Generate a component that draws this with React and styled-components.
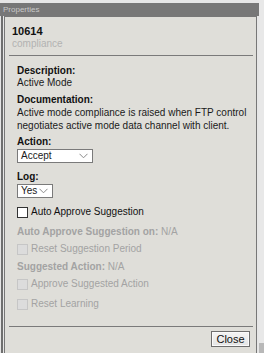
import React from "react";
import styled, { createGlobalStyle } from "styled-components";

const GlobalStyle = createGlobalStyle`
  html, body {
    margin: 0;
    padding: 0;
    background: #e6e6e6;
  }
  body {
    font-family: "Liberation Sans", Arial, sans-serif;
    font-size: 10px;
    color: #1a1a1a;
  }
`;

// Chevron used inside the fake select boxes
const Chevron = () => (
  <svg width="9" height="6" viewBox="0 0 9 6">
    <path d="M0.5 0.8 L4.5 4.8 L8.5 0.8" fill="none" stroke="#8a8a8a" strokeWidth="1" />
  </svg>
);

const App = () => {
  return (
    <>
      <GlobalStyle />
      <Page>
        <Main>
          <TitleBar>Properties</TitleBar>
          <Frame>
            <Panel>
              <Heading>
                <RuleId>10614</RuleId>
                <RuleName>compliance</RuleName>
              </Heading>
              <Divider />
              <Content>
                <Label>Description:</Label>
                <Text>Active Mode</Text>

                <Label $top={5}>Documentation:</Label>
                <Paragraph>
                  Active mode compliance is raised when FTP control negotiates
                  active mode data channel with client.
                </Paragraph>

                <Label $top={4}>Action:</Label>
                <Select $width={76}>
                  <span>Accept</span>
                  <Chevron />
                </Select>

                <Label $top={8}>Log:</Label>
                <Select $width={36}>
                  <span>Yes</span>
                  <Chevron />
                </Select>

                <CheckRow $top={8}>
                  <Box />
                  <span>Auto Approve Suggestion</span>
                </CheckRow>

                <Muted $top={8}>
                  <b>Auto Approve Suggestion on:</b> N/A
                </Muted>
                <CheckRow $top={5} $disabled>
                  <Box $disabled />
                  <span>Reset Suggestion Period</span>
                </CheckRow>

                <Muted $top={6}>
                  <b>Suggested Action:</b> N/A
                </Muted>
                <CheckRow $top={5} $disabled>
                  <Box $disabled />
                  <span>Approve Suggested Action</span>
                </CheckRow>
                <CheckRow $top={8} $disabled>
                  <Box $disabled />
                  <span>Reset Learning</span>
                </CheckRow>
              </Content>
              <Divider $top={16} />
              <Footer>
                <Button>Close</Button>
              </Footer>
            </Panel>
          </Frame>
        </Main>
        <ScrollTrack>
          <ScrollThumb />
        </ScrollTrack>
      </Page>
    </>
  );
};

const Page = styled.div`
  display: flex;
  width: 264px;
  height: 353px;
  overflow: hidden;
  background: #e6e6e6;
`;

const Main = styled.div`
  width: 259px;
  display: flex;
  flex-direction: column;
  padding-top: 3px;
`;

const TitleBar = styled.div`
  height: 13px;
  line-height: 13px;
  background: #777777;
  color: #c9c9c9;
  font-size: 8px;
  padding-left: 3px;
`;

const Frame = styled.div`
  flex: 1;
  display: flex;
  margin-left: 1px;
  border-left: 2px solid #6f6f6f;
  padding-left: 1px;
  padding-right: 2px;
`;

const Panel = styled.div`
  flex: 1;
  background: #dfded9;
  border: 1px solid #777777;
  border-bottom: none;
  display: flex;
  flex-direction: column;
`;

const Heading = styled.div`
  padding: 7px 0 0 7px;
`;

const RuleId = styled.div`
  font-size: 11px;
  font-weight: bold;
  line-height: 14px;
  color: #111;
`;

const RuleName = styled.div`
  font-size: 10px;
  line-height: 12px;
  color: #b2b2b2;
`;

const Divider = styled.div`
  height: 1px;
  background: #7a7a7a;
  margin: ${(p) => p.$top ?? 5}px 3px 0 4px;
`;

const Content = styled.div`
  padding: 9px 0 0 12px;
  display: flex;
  flex-direction: column;
  align-items: flex-start;
`;

const Label = styled.div`
  font-weight: bold;
  line-height: 12px;
  margin-top: ${(p) => p.$top || 0}px;
  color: #111;
`;

const Text = styled.div`
  line-height: 12px;
`;

const Paragraph = styled.div`
  line-height: 13px;
  width: 232px;
`;

const Select = styled.div`
  box-sizing: border-box;
  width: ${(p) => p.$width}px;
  height: 14px;
  margin-top: 1px;
  background: #fff;
  border: 1px solid #7a7a7a;
  display: flex;
  align-items: center;
  justify-content: space-between;
  padding: 0 4px 0 3px;
  line-height: 12px;
`;

const CheckRow = styled.label`
  display: flex;
  align-items: center;
  gap: 3px;
  height: 12px;
  line-height: 12px;
  margin-top: ${(p) => p.$top || 0}px;
  color: ${(p) => (p.$disabled ? "#a3a3a3" : "#111")};
`;

const Box = styled.span`
  box-sizing: border-box;
  width: 11px;
  height: 11px;
  border: 1px solid ${(p) => (p.$disabled ? "#c6c6c6" : "#333")};
  background: ${(p) => (p.$disabled ? "#dcdcdc" : "#fff")};
`;

const Muted = styled.div`
  line-height: 12px;
  margin-top: ${(p) => p.$top || 0}px;
  color: #a3a3a3;
`;

const Footer = styled.div`
  display: flex;
  justify-content: flex-end;
  padding: 4px 6px 0 0;
`;

const Button = styled.button`
  box-sizing: border-box;
  width: 39px;
  height: 16px;
  padding: 0;
  font-family: "Liberation Sans", Arial, sans-serif;
  font-size: 11px;
  color: #111;
  background: linear-gradient(#f4f4f4, #e4e4e4);
  border: 1px solid #6d6d6d;
  box-shadow: inset 0 0 0 1px #fafafa;
`;

const ScrollTrack = styled.div`
  width: 5px;
  background: #e8e8e8;
  display: flex;
  flex-direction: column;
  justify-content: flex-end;
`;

const ScrollThumb = styled.div`
  height: 10px;
  background: #b8b8b8;
`;

export default App;
